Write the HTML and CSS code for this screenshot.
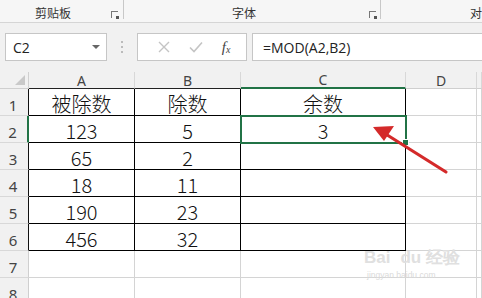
FILE: index.html
```html
<!DOCTYPE html>
<html>
<head>
<meta charset="utf-8">
<link rel="stylesheet" href="styles.css">
</head>
<body>
<div class="app">
  <div class="ribbon">
    <div class="grp g1"><span class="glabel">剪贴板</span><span class="launch"></span></div>
    <div class="grp g2"><span class="glabel">字体</span><span class="launch"></span></div>
    <div class="grp g3"><span class="glabel">对</span></div>
  </div>
  <div class="fbar">
    <div class="namebox"><span>C2</span><span class="drop"></span></div>
    <div class="dots"><i></i><i></i><i></i></div>
    <div class="fbtns">
      <svg width="12" height="12" viewBox="0 0 12 12"><path d="M1 1L11 11M11 1L1 11" stroke="#c4c4c4" stroke-width="1.4"/></svg>
      <svg width="14" height="12" viewBox="0 0 14 12"><path d="M1 6.5L5 10.5L13 1.5" stroke="#c4c4c4" stroke-width="1.6" fill="none"/></svg>
      <span class="fx">f<sub>x</sub></span>
    </div>
    <div class="ftext">=MOD(A2,B2)</div>
  </div>
  <div class="sheet">
    <div class="corner"><span class="tri"></span></div>
    <div class="ch tb">A</div><div class="ch tb">B</div><div class="ch sel">C</div><div class="ch">D</div><div class="ch last"></div>

    <div class="rh tr">1</div><div class="c t">被除数</div><div class="c t">除数</div><div class="c t">余数</div><div class="c"></div><div class="c last"></div>
    <div class="rh selr">2</div><div class="c t">123</div><div class="c t">5</div><div class="c t active">3<span class="handle"></span></div><div class="c"></div><div class="c last"></div>
    <div class="rh tr">3</div><div class="c t">65</div><div class="c t">2</div><div class="c t"></div><div class="c"></div><div class="c last"></div>
    <div class="rh tr">4</div><div class="c t">18</div><div class="c t">11</div><div class="c t"></div><div class="c"></div><div class="c last"></div>
    <div class="rh tr">5</div><div class="c t">190</div><div class="c t">23</div><div class="c t"></div><div class="c"></div><div class="c last"></div>
    <div class="rh tr">6</div><div class="c t">456</div><div class="c t">32</div><div class="c t"></div><div class="c"></div><div class="c last"></div>
    <div class="rh">7</div><div class="c"></div><div class="c"></div><div class="c"></div><div class="c"></div><div class="c last"></div>
    <div class="rh">8</div><div class="c"></div><div class="c"></div><div class="c"></div><div class="c"></div><div class="c last"></div>
  </div>
  <svg class="arrow" width="482" height="298" viewBox="0 0 482 298">
    <path d="M446 172L384 133" stroke="#d42a2a" stroke-width="3.2" stroke-linecap="round"/>
    <path d="M373 127L394 126L384 141Z" fill="#d42a2a"/>
  </svg>
  <div class="wm">
    <div class="wm1">Bai<span class="paw"></span>du 经验</div>
    <div class="wm2">jingyan.baidu.com</div>
  </div>
</div>
</body>
</html>
```
FILE: styles.css
```css
* { box-sizing: border-box; }
html, body { margin: 0; padding: 0; }
body { width: 482px; height: 298px; overflow: hidden; background: #fff; font-family: "Noto Sans CJK SC", "Noto Sans", sans-serif; }
.app { position: relative; width: 482px; height: 298px; overflow: hidden; background: #f1f1f1; }

.ribbon { display: flex; height: 23px; background: #f6f6f6; border-bottom: 1px solid #d5d5d5; }
.grp { position: relative; height: 19px; display: flex; align-items: center; }
.g1 { width: 124px; border-right: 1px solid #c8c8c8; }
.g2 { width: 257px; border-right: 1px solid #c8c8c8; }
.g3 { flex: 1; }
.glabel { font-size: 12px; color: #333; line-height: 1; padding-top: 6px; }
.g1 .glabel { margin-left: 35px; }
.g2 .glabel { margin-left: 108px; }
.g3 .glabel { margin-left: 89px; }
.launch { position: absolute; right: 4px; top: 11px; width: 7px; height: 7px; border-left: 1px solid #777; border-top: 1px solid #777; }
.launch::after { content: ""; position: absolute; right: -1px; bottom: -1px; width: 3px; height: 3px; background: #555; }
.g1 .launch { right: 5px; }

.fbar { display: flex; align-items: flex-start; height: 49px; padding-top: 10px; }
.namebox { margin-left: 5px; width: 102px; height: 28px; background: #fff; border: 1px solid #c6c6c6; display: flex; align-items: center; justify-content: space-between; padding: 0 6px 0 7px; font-family: "Open Sans", "Noto Sans", sans-serif; font-size: 14px; color: #222; }
.drop { width: 0; height: 0; border-left: 4px solid transparent; border-right: 4px solid transparent; border-top: 4px solid #666; }
.dots { width: 30px; height: 28px; display: flex; flex-direction: column; align-items: center; justify-content: center; gap: 3px; }
.dots i { display: block; width: 2px; height: 2px; background: #bbb; }
.fbtns { width: 110px; height: 28px; background: #fff; border: 1px solid #c6c6c6; display: flex; align-items: center; justify-content: space-around; padding: 0 6px 0 10px; }
.fx { font-family: "Liberation Serif", serif; font-style: italic; font-size: 15px; color: #444; }
.fx sub { font-size: 10px; vertical-align: -1px; }
.ftext { margin-left: 5px; flex: 1; height: 28px; background: #fff; border: 1px solid #c6c6c6; border-right: none; padding-left: 10px; display: flex; align-items: center; font-family: "Open Sans", "Noto Sans", sans-serif; font-size: 14px; color: #222; }

.sheet { display: grid; grid-template-columns: 29px 106px 106px 165px 71px 5px; grid-template-rows: 17px repeat(8, 27px); background: #fff; }
.corner { background: #f1f1f1; border-right: 1px solid #d0d0d0; border-bottom: 1px solid #cfcfcf; position: relative; }
.tri { position: absolute; right: 3px; bottom: 3px; width: 0; height: 0; border-left: 10px solid transparent; border-bottom: 10px solid #c9c9c9; }
.ch { background: #f1f1f1; border-right: 1px solid #d8d8d8; border-bottom: 1px solid #cfcfcf; font-family: "Noto Sans", sans-serif; font-size: 14px; color: #444; display: flex; justify-content: center; align-items: flex-end; line-height: 1; }
.ch.tb { border-bottom-color: #222; }
.ch.sel { border-bottom: 2px solid #217346; }
.rh { background: #f1f1f1; border-right: 1px solid #cfcfcf; border-bottom: 1px solid #d8d8d8; font-family: "Noto Sans", sans-serif; font-size: 15px; color: #444; display: flex; justify-content: center; align-items: flex-end; line-height: 1; padding-bottom: 2px; padding-right: 2px; }
.rh.tr { border-right-color: #111; }
.rh.selr { border-right: 2px solid #217346; }
.c { border-right: 1px solid #d4d4d4; border-bottom: 1px solid #d4d4d4; display: flex; justify-content: center; align-items: center; font-size: 20px; color: #111; line-height: 1; font-family: "Noto Sans CJK SC", "Noto Sans", sans-serif; font-weight: 300; padding-top: 4px; position: relative; }
.c.t { border-right: 1px solid #000; border-bottom: 1px solid #000; }
.c.last { border-right: 1px solid #d4d4d4; }
.c.active { outline: 2px solid #217346; outline-offset: -1px; z-index: 2; }
.handle { position: absolute; right: -4px; bottom: -4px; width: 5px; height: 5px; background: #217346; border: 1px solid #fff; box-sizing: content-box; }

.arrow { position: absolute; left: 0; top: 0; pointer-events: none; z-index: 5; }

.wm { position: absolute; left: 364px; top: 249px; color: #e0e0e0; z-index: 4; font-family: "Liberation Sans", sans-serif; }
.wm1 { font-size: 17px; font-weight: bold; line-height: 1; }
.paw { display: inline-block; width: 10px; }
.wm2 { font-size: 8.5px; margin-top: 4px; margin-left: 3px; color: #dadada; }
```
